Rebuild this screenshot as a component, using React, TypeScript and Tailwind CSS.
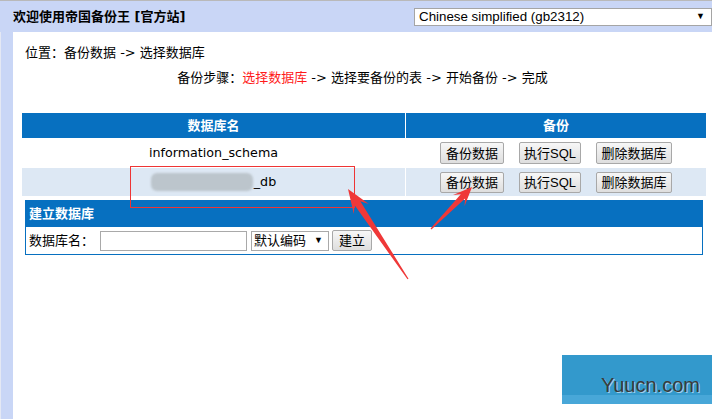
import React from "react";

const bodyFont = "font-['DejaVu_Sans','Noto_Sans_CJK_SC',sans-serif]";
const ctrlFont = "font-['Liberation_Sans','Noto_Sans_CJK_SC',sans-serif]";

type Pt = [number, number];

// snap-style tapered arrow, from tail to tip
function arrowPoints(tail: Pt, tip: Pt, head: number, barb: number, neck: number, neckW: number, tailW: number) {
  const dx = tip[0] - tail[0];
  const dy = tip[1] - tail[1];
  const len = Math.hypot(dx, dy);
  const ux = dx / len;
  const uy = dy / len;
  const nx = -uy;
  const ny = ux;
  const bx = tip[0] - ux * head;
  const by = tip[1] - uy * head;
  const kx = tip[0] - ux * neck;
  const ky = tip[1] - uy * neck;
  const pts: Pt[] = [
    [tail[0] + nx * tailW, tail[1] + ny * tailW],
    [kx + nx * neckW, ky + ny * neckW],
    [bx + nx * barb, by + ny * barb],
    tip,
    [bx - nx * barb, by - ny * barb],
    [kx - nx * neckW, ky - ny * neckW],
    [tail[0] - nx * tailW, tail[1] - ny * tailW],
  ];
  return pts.map((p) => `${p[0].toFixed(1)},${p[1].toFixed(1)}`).join(" ");
}

function Btn({ label, w, h = "h-[22px]" }: { label: string; w: string; h?: string }) {
  return (
    <div
      className={`${w} ${h} ${ctrlFont} flex items-center justify-center rounded-[2px] border border-[#a8a8a8] bg-gradient-to-b from-[#f7f7f7] to-[#dedede] text-[13px] leading-none text-black`}
    >
      {label}
    </div>
  );
}

function DbRow({ name, shaded }: { name: React.ReactNode; shaded?: boolean }) {
  const bh = shaded ? "h-[21px]" : "h-[22px]";
  return (
    <div className={`flex ${shaded ? "h-[28px] bg-[#dde8f4]" : "h-[30px] bg-white"}`}>
      <div className="flex w-[383px] items-center justify-center">{name}</div>
      <div className="flex flex-1 items-center justify-center gap-[15px] border-l border-white">
        <Btn label="备份数据" w="w-[64px]" h={bh} />
        <Btn label="执行SQL" w="w-[62px]" h={bh} />
        <Btn label="删除数据库" w="w-[76px]" h={bh} />
      </div>
    </div>
  );
}

export default function App() {
  return (
    <div className={`relative h-[419px] w-[712px] overflow-hidden border-t border-[#b9b9b9] bg-white ${bodyFont} text-[13px] text-black`}>
      {/* top bar */}
      <div className="flex h-[31px] items-center justify-between bg-[#c9d6f6] pl-[13px]">
        <span className="mt-[1px] text-[13px] font-bold">欢迎使用帝国备份王 [官方站]</span>
        <div className={`${ctrlFont} mt-[1px] flex h-[18px] w-[298px] items-center justify-between border border-[#a5a5a5] bg-white pl-[4px] pr-[6px] text-[13.33px]`}>
          <span>Chinese simplified (gb2312)</span>
          <span className="text-[9px]">▼</span>
        </div>
      </div>

      <div className="flex h-full">
        <div className="w-[13px] shrink-0 border-l border-[#e4e8f4] bg-[#c9d6f6]" />
        <div className="flex flex-1 flex-col">
          <div className="mt-[13px] pl-[12px] leading-[16px]">位置：备份数据 -&gt; 选择数据库</div>
          <div className="mt-[9px] text-center leading-[16px]">
            备份步骤：<span className="text-[#ff1a1a]">选择数据库</span> -&gt; 选择要备份的表 -&gt; 开始备份 -&gt; 完成
          </div>

          {/* database table */}
          <div className="ml-[9px] mt-[27px] w-[684px]">
            <div className="flex h-[25px] bg-[#0770c0] font-bold text-white">
              <div className="flex w-[383px] items-center justify-center">数据库名</div>
              <div className="flex flex-1 items-center justify-center border-l border-white">备份</div>
            </div>
            <DbRow name={<span className="text-[12.7px]">information_schema</span>} />
            <DbRow
              shaded
              name={
                <span className="flex items-center text-[12.7px]">
                  <span className="mr-px inline-block h-[18px] w-[102px] rounded-[6px] bg-[#bcc5cc] blur-[1.2px]" />
                  _db
                </span>
              }
            />
          </div>

          {/* create database */}
          <div className="ml-[12px] mt-[4px] w-[678px]">
            <div className="flex h-[27px] items-center bg-[#0770c0] pl-[4px] font-bold text-white">建立数据库</div>
            <div className="flex h-[28px] items-center border-x border-b border-[#0770c0] pl-[3px]">
              <span className="w-[71px]">数据库名：</span>
              <div className="h-[20px] w-[147px] border border-[#a9a9a9] bg-white" />
              <div className={`${ctrlFont} ml-[4px] flex h-[20px] w-[78px] items-center justify-between border border-[#a9a9a9] bg-white pl-[2px] pr-[5px] text-[13px]`}>
                <span>默认编码</span>
                <span className="text-[9px]">▼</span>
              </div>
              <div className="ml-[3px]">
                <Btn label="建立" w="w-[40px]" h="h-[21px]" />
              </div>
            </div>
          </div>
        </div>
      </div>

      {/* annotations */}
      <div className="absolute left-[130px] top-[165px] h-[42px] w-[225px] border border-[#ee3535]" />
      <svg className="absolute left-0 top-0" width="712" height="419" viewBox="0 0 712 419">
        <polygon points={arrowPoints([408, 278], [348, 188], 24, 9, 17, 3.5, 0.6)} fill="#ef3838" />
        <polygon points={arrowPoints([431, 228], [472, 186], 19, 8, 13, 3, 0.6)} fill="#ef3838" />
      </svg>

      {/* watermark */}
      <div className="absolute left-[562px] top-[354px] flex h-[49px] w-[150px] flex-col bg-[#3399cc]">
        <div className="flex flex-1 items-end pl-[39px]">
          <span className="font-['Liberation_Sans',sans-serif] text-[20px] leading-[20px] text-[#3a3a3a] [text-shadow:1px_1px_0_#9fd0ea]">
            Yuucn.com
          </span>
        </div>
        <div className="h-[9px] bg-[#48a7d8]" />
      </div>
    </div>
  );
}
